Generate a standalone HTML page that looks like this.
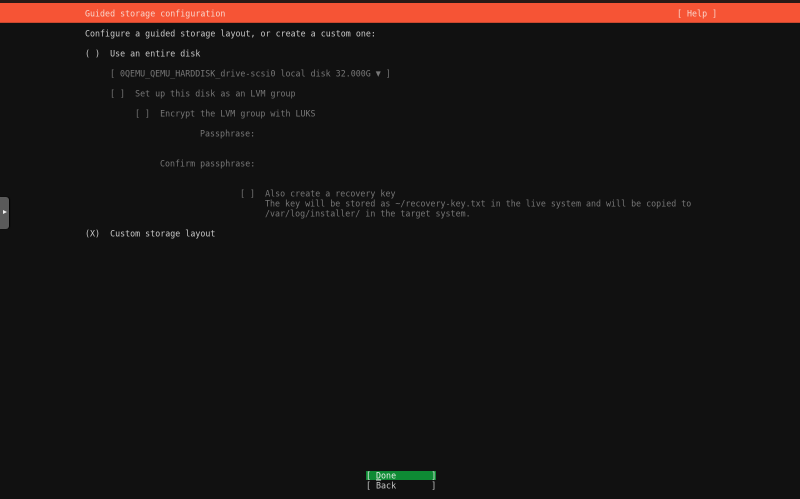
<!DOCTYPE html>
<html>
<head>
<meta charset="utf-8">
<title>Guided storage configuration</title>
<style>
html,body{margin:0;padding:0;background:#111111;}
body{width:800px;height:499px;overflow:hidden;position:relative;}
#top{position:absolute;left:0;top:0;width:800px;height:3px;background:#2a1a16;}
#bar{position:absolute;left:0;top:3px;width:800px;height:19px;background:#f65435;border-bottom:1px solid #c9482f;}
.t{position:absolute;white-space:pre;font-family:"DejaVu Sans Mono","Liberation Mono",monospace;font-size:8.3px;letter-spacing:0.02px;line-height:10px;height:10px;color:#c8c8c8;filter:blur(0.3px);transform:scaleY(1.1);transform-origin:0 50%;}
.g{color:#777777;}
.w{color:#f9d5cb;}
#done{position:absolute;left:366px;top:471px;width:70px;height:9px;background:#0e8a34;}
#handle{position:absolute;left:0;top:197px;width:9px;height:32px;background:#5a5a5a;border-radius:0 3px 3px 0;box-shadow:1px 0 1px #000;}
#arrow{position:absolute;left:3px;top:210px;width:0;height:0;border-left:4px solid #f0f0f0;border-top:2.5px solid transparent;border-bottom:2.5px solid transparent;}
</style>
</head>
<body>
<div id="top"></div>
<div id="bar"></div>
<div class="t w" style="left:85px;top:8px">Guided storage configuration</div>
<div class="t w" style="left:677px;top:8px">[ Help ]</div>
<div class="t" style="left:85px;top:28px">Configure a guided storage layout, or create a custom one:</div>
<div class="t" style="left:85px;top:48px">( )  Use an entire disk</div>
<div class="t g" style="left:110px;top:68px">[ 0QEMU_QEMU_HARDDISK_drive-scsi0 local disk 32.000G ▼ ]</div>
<div class="t g" style="left:110px;top:88px">[ ]  Set up this disk as an LVM group</div>
<div class="t g" style="left:135px;top:108px">[ ]  Encrypt the LVM group with LUKS</div>
<div class="t g" style="left:200px;top:128px">Passphrase:</div>
<div class="t g" style="left:160px;top:158px">Confirm passphrase:</div>
<div class="t g" style="left:240px;top:188px">[ ]  Also create a recovery key</div>
<div class="t g" style="left:265px;top:198px">The key will be stored as ~/recovery-key.txt in the live system and will be copied to</div>
<div class="t g" style="left:265px;top:208px">/var/log/installer/ in the target system.</div>
<div class="t" style="left:85px;top:228px">(X)  Custom storage layout</div>
<div id="handle"></div>
<div id="arrow"></div>
<div id="done"></div>
<div class="t" style="left:366px;top:470px;color:#e4efe6">[ <span style="text-decoration:underline">D</span>one       ]</div>
<div class="t" style="left:366px;top:480px">[ Back       ]</div>
</body>
</html>
